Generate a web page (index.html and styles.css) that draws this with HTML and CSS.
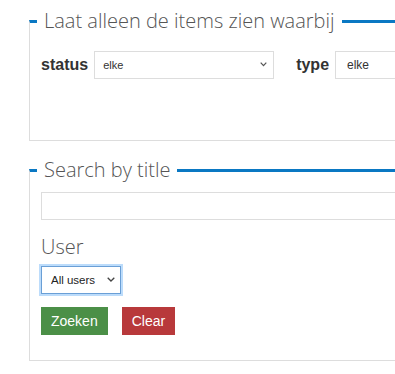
FILE: index.html
```html
<!DOCTYPE html>
<html lang="nl">
<head>
  <meta charset="UTF-8" />
  <meta name="viewport" content="width=device-width, initial-scale=1.0" />
  <title>Zoeken</title>
  <link rel="stylesheet" href="styles.css">
</head>
<body>
  <div class="page">
    <fieldset class="filter">
      <legend>Laat alleen de items zien waarbij</legend>
      <div class="filter-row">
        <label class="filter-label" for="status">status</label>
        <span class="select-wrap">
          <select class="filter-select small" id="status">
            <option>elke</option>
          </select>
          <svg class="chevron" width="7" height="5" viewBox="0 0 7 5"><path d="M0.7 0.7 L3.5 3.7 L6.3 0.7" fill="none" stroke="#555" stroke-width="1.2"/></svg>
        </span>
        <label class="filter-label type-label" for="type">type</label>
        <span class="select-wrap">
          <select class="filter-select wide" id="type">
            <option>elke</option>
          </select>
        </span>
      </div>
    </fieldset>

    <fieldset class="filter search">
      <legend>Search by title</legend>
      <input class="title-input" type="text" />
      <label class="user-label" for="user">User</label>
      <span class="select-wrap user-wrap">
        <select class="user-select focused" id="user">
          <option>All users</option>
        </select>
        <svg class="chevron" width="8" height="5" viewBox="0 0 8 5"><path d="M0.7 0.7 L4 4 L7.3 0.7" fill="none" stroke="#444" stroke-width="1.3"/></svg>
      </span>
      <div class="actions">
        <button class="btn btn-search">Zoeken</button>
        <button class="btn btn-clear">Clear</button>
      </div>
    </fieldset>
  </div>
</body>
</html>
```

FILE: styles.css
```css
/* Global */
html, body {
  overflow: hidden;
}
body {
  margin: 0;
  background: #fff;
  font-family: "Liberation Sans", Arial, sans-serif;
  color: #333;
}
.page {
  padding: 7px 0 0 29px;
  width: 640px;
}
/* Fieldsets */
.filter {
  margin: 0;
  min-width: 0;
  border: 1px solid #ddd;
  border-top: 3px solid #0a78c3;
  padding: 8px 11px 61px;
}
.filter legend {
  margin-left: -4px;
  padding: 0 7px;
  font-family: "Open Sans", sans-serif;
  font-weight: 300;
  font-size: 20px;
  line-height: 28px;
  color: #555;
}
.search {
  margin-top: 15px;
  padding-bottom: 25px;
}
/* Selects */
.select-wrap {
  position: relative;
  display: inline-block;
}
.select-wrap select {
  appearance: none;
  -webkit-appearance: none;
  display: block;
  margin: 0;
  font-family: "Liberation Sans", Arial, sans-serif;
}
.chevron {
  position: absolute;
  top: 11px;
  right: 7px;
  pointer-events: none;
}
/* Filter row */
.filter-row {
  display: flex;
  align-items: center;
  margin-top: 8px;
}
.filter-label {
  font-weight: bold;
  font-size: 16px;
  color: #333;
  margin-right: 6px;
}
.type-label {
  margin-left: 22px;
}
.filter-select {
  height: 28px;
  border: 1px solid #ddd;
  border-radius: 0;
  background: #fff;
  color: #333;
  padding: 0 8px;
}
.filter-select.small {
  width: 180px;
  font-size: 11px;
}
.filter-select.wide {
  width: 200px;
  font-size: 12px;
  padding-left: 11px;
}
/* Search block */
.title-input {
  display: block;
  box-sizing: border-box;
  width: 100%;
  height: 28px;
  border: 1px solid #ddd;
  margin: 0;
}
.user-label {
  display: block;
  margin-top: 13px;
  font-family: "Open Sans", sans-serif;
  font-weight: 300;
  font-size: 20px;
  line-height: 27px;
  color: #555;
}
.user-wrap {
  margin-top: 6px;
}
.user-wrap .chevron {
  right: 6px;
  top: 11px;
}
.user-select {
  width: 80px;
  height: 28px;
  font-size: 11.5px;
  color: #222;
  background: #fff;
  border: 1px solid #ccc;
  border-radius: 0;
  padding: 0 9px;
}
.user-select.focused {
  border-color: #6a9fd6;
  box-shadow: 0 0 0 2px #bcdcfb;
}
/* Buttons */
.actions {
  display: flex;
  gap: 14px;
  margin-top: 13px;
}
.btn {
  height: 28px;
  border: none;
  border-radius: 0;
  padding: 0 10px;
  font-family: "Liberation Sans", Arial, sans-serif;
  font-size: 14px;
  color: #fff;
  cursor: pointer;
}
.btn-search {
  background: #4b8f47;
}
.btn-clear {
  background: #b8393b;
}
```
